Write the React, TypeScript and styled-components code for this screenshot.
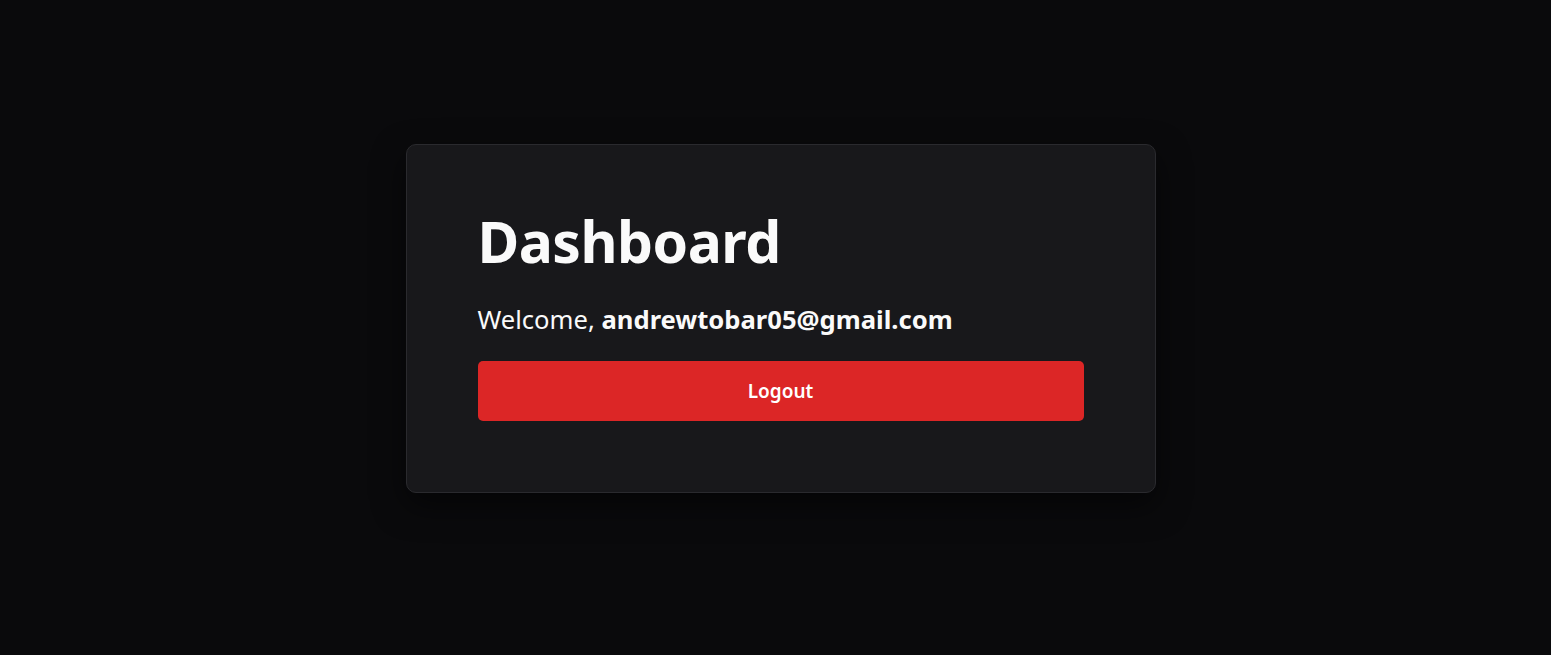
import React from 'react';
import styled, { createGlobalStyle } from 'styled-components';

const GlobalStyle = createGlobalStyle`
  html, body {
    margin: 0;
    padding: 0;
    background: #0a0a0c;
    font-family: 'Segoe UI', 'Noto Sans', 'Open Sans', sans-serif;
    color: #fafafa;
  }
  * {
    box-sizing: border-box;
  }
`;

const Page = styled.main`
  min-height: 655px;
  display: flex;
  align-items: center;
  justify-content: center;
  padding: 0 0 18px 10px;
`;

const Card = styled.section`
  width: 750px;
  padding: 71px;
  background: #18181b;
  border: 1px solid #2a2a2e;
  border-radius: 10px;
  box-shadow: 0 12px 32px rgba(0, 0, 0, 0.55);
  display: flex;
  flex-direction: column;
`;

const Title = styled.h1`
  margin: 0;
  font-size: 57px;
  font-weight: 700;
  line-height: 0.9;
  letter-spacing: -0.5px;
`;

const Welcome = styled.p`
  margin: 35px 0 0;
  font-size: 25.6px;
  line-height: 1.3;
  font-weight: 400;

  strong {
    font-weight: 700;
  }
`;

const Button = styled.button<{ $variant?: 'danger' | 'primary' }>`
  margin-top: 25px;
  height: 60px;
  width: 100%;
  border: none;
  border-radius: 5px;
  background: ${(p) => (p.$variant === 'danger' ? '#dc2626' : '#2563eb')};
  color: #ffffff;
  font-family: inherit;
  font-size: 19px;
  font-weight: 600;
  cursor: pointer;
`;

export default function App(): JSX.Element {
  return (
    <>
      <GlobalStyle />
      <Page>
        <Card>
          <Title>Dashboard</Title>
          <Welcome>
            Welcome, <strong>andrewtobar05@gmail.com</strong>
          </Welcome>
          <Button $variant="danger">Logout</Button>
        </Card>
      </Page>
    </>
  );
}
